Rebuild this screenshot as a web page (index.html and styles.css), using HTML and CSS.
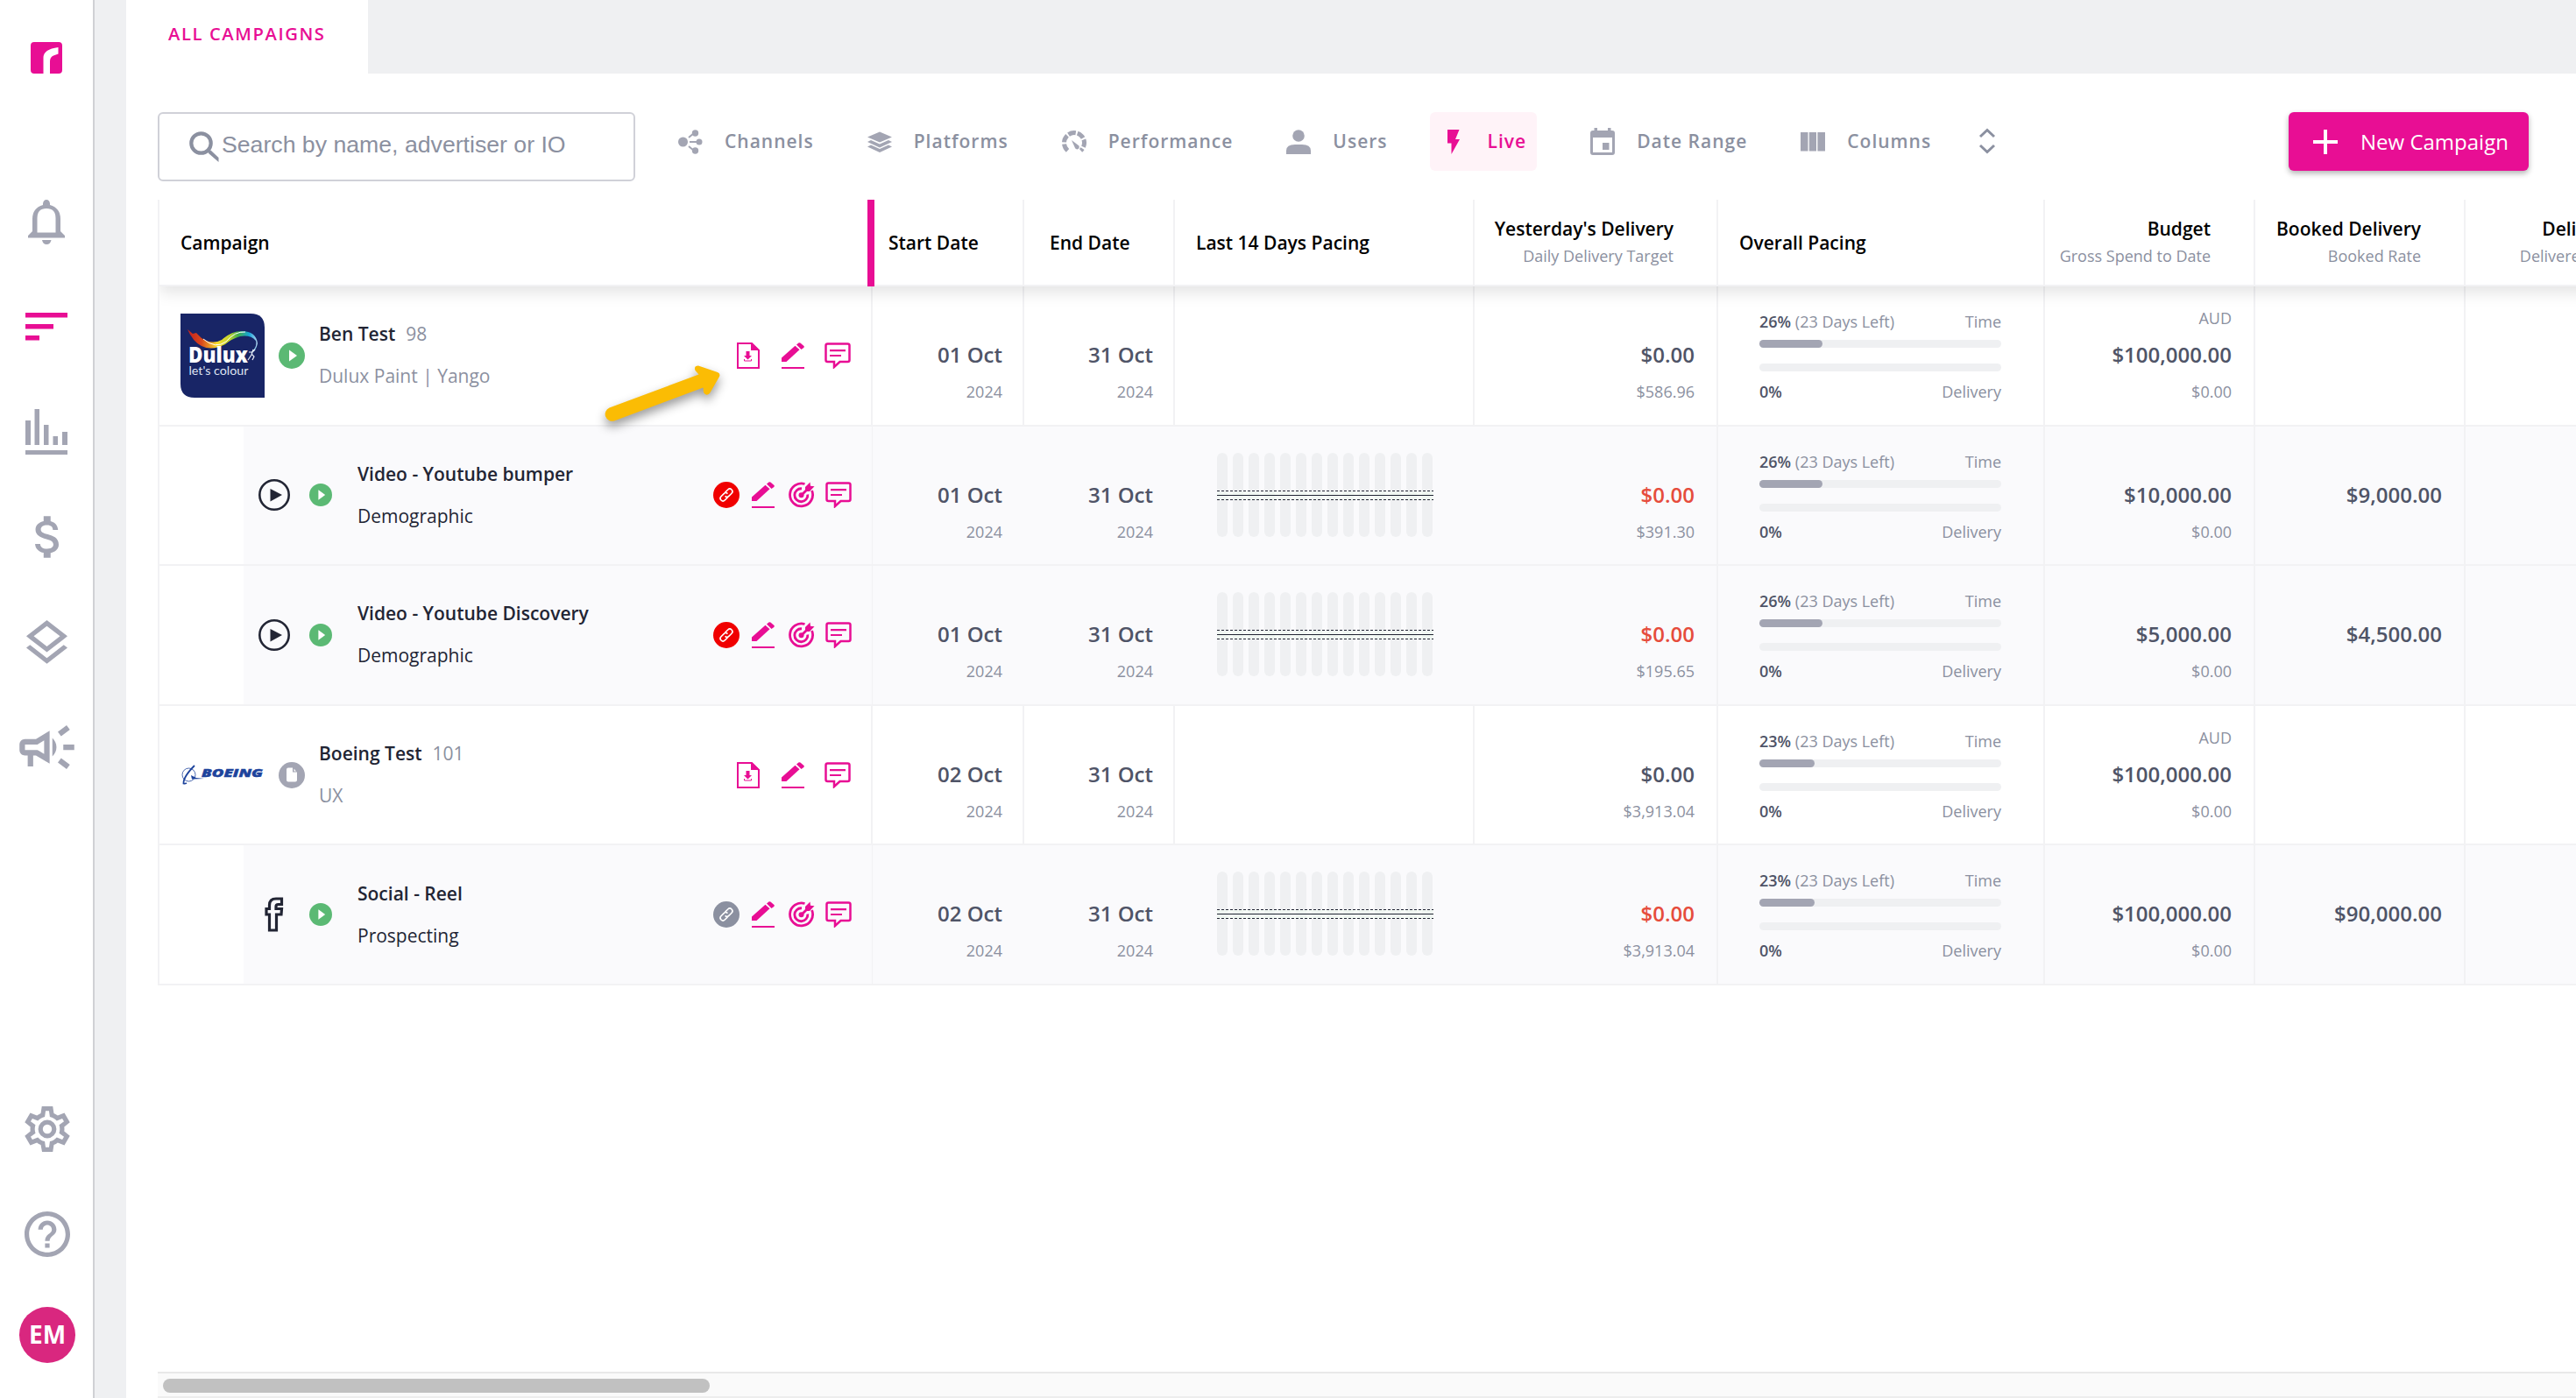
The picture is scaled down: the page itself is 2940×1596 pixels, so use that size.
FILE: index.html
```html
<!DOCTYPE html>
<html lang="en">
<head>
    <meta charset="UTF-8">
    <meta name="viewport" content="width=device-width, initial-scale=1.0">
    <title>All Campaigns</title>
    <link rel="stylesheet" href="styles.css">
</head>
<body>

    <!-- shared icons -->
    <svg class="sprite" aria-hidden="true">
        <symbol id="i-download" viewBox="0 0 26 30">
            <path d="M1 1H17L25 9V29H1Z" fill="none" stroke="currentColor" stroke-width="2"/>
            <path d="M16 0L26 9H16Z" fill="currentColor"/>
            <path d="M10.500 10H14.500V15H17L12.500 19.500L8 15H10.500Z" fill="currentColor"/>
            <path d="M8.500 19V21H16.500V19" fill="none" stroke="currentColor" stroke-width="1"/>
        </symbol>
        <symbol id="i-edit" viewBox="0 0 26 30">
            <path d="M0 17.500L15.500 3.800L20.500 8.300L5.500 22H0Z" fill="currentColor"/>
            <path d="M17 2.500L19.400 .5Q20.400 -.2 21.400 .5L25.500 4Q26.200 5 25.300 5.900L22.500 8Z" fill="currentColor"/>
            <path d="M0 28H26V30H0Z" fill="currentColor"/>
        </symbol>
        <symbol id="i-comment" viewBox="0 0 30 30">
            <path d="M3.500 1.500H26.500Q28.500 1.500 28.500 3.500V20Q28.500 22 26.500 22H17.500L11 28V22H3.500Q1.500 22 1.500 20V3.500Q1.500 1.500 3.500 1.500Z" fill="none" stroke="currentColor" stroke-width="2.500"/>
            <path d="M6 9.200H24M6 15H19" stroke="currentColor" stroke-width="2.200"/>
        </symbol>
        <symbol id="i-target" viewBox="0 0 30 30">
            <g fill="none" stroke="currentColor" stroke-width="2.800">
                <path d="M18.500 2.500A13 13 0 1 0 26.600 10"/>
                <path d="M15 7.800A7.500 7.500 0 1 0 21.800 14.500"/>
                <path d="M14.500 15.500L23 7"/>
            </g>
            <circle cx="14.500" cy="15.300" r="3" fill="currentColor"/>
            <path d="M19 10V6L24.500 .5L25 4.800L29.500 5.300L24 11H19Z" fill="currentColor"/>
        </symbol>
        <symbol id="i-link" viewBox="0 0 30 30">
            <circle cx="15" cy="15" r="15" fill="currentColor"/>
            <g transform="rotate(-45 15 15)" fill="none" stroke="#fff" stroke-width="1.600">
                <path d="M14 18H9.500A3 3 0 0 1 9.500 12H14A3 3 0 0 1 17 15"/>
                <path d="M16 12H20.500A3 3 0 0 1 20.500 18H16A3 3 0 0 1 13 15"/>
            </g>
        </symbol>
        <symbol id="i-live" viewBox="0 0 30 30">
            <circle cx="15" cy="15" r="15" fill="#5bb974"/>
            <path d="M12 8.500L21 15L12 21.500Z" fill="#fff"/>
        </symbol>
        <symbol id="i-draft" viewBox="0 0 30 30">
            <circle cx="15" cy="15" r="15" fill="#a3a5b3"/>
            <path d="M11 6.500H16V11.500H21V20.500Q21 22.500 19 22.500H11Q9 22.500 9 20.500V8.500Q9 6.500 11 6.500Z" fill="#fff"/>
            <path d="M17.500 7.500L20 10.500H17.500Z" fill="#fff"/>
        </symbol>
        <symbol id="i-video" viewBox="0 0 36 36">
            <circle cx="18" cy="18" r="16.700" fill="none" stroke="currentColor" stroke-width="2.600"/>
            <path d="M13.500 11L27 18L13.500 25.500Z" fill="currentColor"/>
        </symbol>
        <symbol id="i-facebook" viewBox="0 0 22 40">
            <path d="M5.500 38V20H2V13.500H5.500V9.500Q5.500 2 13 2H19.500V8.500H15.500Q13 8.500 13 11V13.500H19.500L19 20H13.500V38Z" fill="none" stroke="currentColor" stroke-width="3.200"/>
        </symbol>
        <symbol id="i-pacing" viewBox="0 0 248 96">
            <g fill="#eff0f2">
                <rect x="0" width="12" height="96" rx="6"/>
                <rect x="18" width="12" height="96" rx="6"/>
                <rect x="36" width="12" height="96" rx="6"/>
                <rect x="54" width="12" height="96" rx="6"/>
                <rect x="72" width="12" height="96" rx="6"/>
                <rect x="90" width="12" height="96" rx="6"/>
                <rect x="108" width="12" height="96" rx="6"/>
                <rect x="126" width="12" height="96" rx="6"/>
                <rect x="144" width="12" height="96" rx="6"/>
                <rect x="162" width="12" height="96" rx="6"/>
                <rect x="180" width="12" height="96" rx="6"/>
                <rect x="198" width="12" height="96" rx="6"/>
                <rect x="216" width="12" height="96" rx="6"/>
                <rect x="234" width="12" height="96" rx="6"/>
            </g>
            <rect y="44" width="247" height="10" fill="#f2fff2" opacity=".45"/>
            <g stroke="#222534">
                <path d="M0 43.500H247M0 53.500H247" stroke-dasharray="3 2"/>
                <path d="M0 48.500H247"/>
            </g>
        </symbol>
    </svg>

    <div class="app">
        <aside class="sidebar">
            <svg class="brand" viewBox="0 0 36 36" width="36" height="36">
                <path d="M4 0H32Q36 0 36 4V32Q36 36 32 36H22V22Q22 17 26 15.500L31.500 13.500V6Q14.500 8 14.500 18V36H4Q0 36 0 32V4Q0 0 4 0Z" fill="#e80e94"/>
            </svg>
            <nav class="nav">
                <a class="nav-item">
                    <svg viewBox="0 0 42 51" width="42" height="51">
                        <path fill-rule="evenodd" d="M17 6V4.500Q17.500 0 21 0T25 4.500V6Q37 9.500 37 22V36L42 41V43.500H0V41L5 36V22Q5 9.500 17 6ZM10.500 37.500H31.500V21Q31.500 10 21 10T10.500 21Z"/>
                        <path d="M16 46H26.500Q25.500 51 21.200 51T16 46Z"/>
                    </svg>
                </a>
                <a class="nav-item active">
                    <svg viewBox="0 0 48 32" width="48" height="32">
                        <path d="M0 0H48V5.500H0ZM0 13H32V18.500H0ZM0 26H16V31.500H0Z"/>
                    </svg>
                </a>
                <a class="nav-item">
                    <svg viewBox="0 0 48 52" width="48" height="52">
                        <path d="M0 13H6V41H0ZM10.500 0H16V41H10.500ZM21 18H26.500V41H21ZM31.500 31H37V41H31.500ZM42 26H48V41H42ZM0 47H48V52H0Z"/>
                    </svg>
                </a>
                <a class="nav-item">
                    <svg viewBox="6.3 3 10.2 18" width="27" height="48">
                        <path d="M11.8 10.9c-2.27-.59-3-1.2-3-2.150 0-1.090 1.010-1.850 2.700-1.850 1.780 0 2.440.85 2.500 2.100h2.210c-.07-1.720-1.120-3.300-3.210-3.810V3h-3v2.160c-1.940.42-3.500 1.680-3.500 3.610 0 2.310 1.910 3.460 4.700 4.130 2.500.6 3 1.480 3 2.410 0 .69-.49 1.790-2.700 1.790-2.060 0-2.870-.92-2.980-2.100h-2.200c.12 2.190 1.760 3.420 3.680 3.830V21h3v-2.150c1.950-.37 3.500-1.500 3.500-3.550 0-2.840-2.430-3.810-4.700-4.400z"/>
                    </svg>
                </a>
                <a class="nav-item">
                    <svg viewBox="3 2 18 19.1" width="47" height="50">
                        <path d="M11.990 18.540l-7.370-5.730L3 14.070l9 7 9-7-1.630-1.270-7.380 5.740zM12 16l7.360-5.730L21 9l-9-7-9 7 1.630 1.270L12 16zm0-11.470L17.740 9 12 13.470 6.260 9 12 4.530z"/>
                    </svg>
                </a>
                <a class="nav-item">
                    <svg viewBox="2 4 20 16" width="63" height="50">
                        <path d="M18 11v2h4v-2zM16 17.610l3.200 2.390 1.200-1.600-3.200-2.400zM20.400 5.600L19.200 4 16 6.400 17.200 8zM4 9c-1.100 0-2 .9-2 2v2c0 1.100.9 2 2 2h1v4h2v-4h1l5 3V6L8 9H4zm5.030 1.710L11 9.530v4.940l-1.970-1.180-.48-.29H4v-2h4.550l.48-.29zM15.500 12c0-1.330-.58-2.530-1.500-3.350v6.690c.92-.81 1.500-2.010 1.500-3.340z"/>
                    </svg>
                </a>
            </nav>
            <nav class="nav nav-bottom">
                <a class="nav-item">
                    <svg viewBox="2 2 20 20" width="52" height="52">
                        <path d="M12,8A4,4 0 0,1 16,12A4,4 0 0,1 12,16A4,4 0 0,1 8,12A4,4 0 0,1 12,8M12,10A2,2 0 0,0 10,12A2,2 0 0,0 12,14A2,2 0 0,0 14,12A2,2 0 0,0 12,10M9.700,22L9.130,18.930C8.500,18.680 7.960,18.340 7.440,17.940L4.500,19.100L2.100,15L4.570,12.970L4.500,12L4.570,11L2.100,9L4.500,4.900L7.440,6.050C7.960,5.660 8.500,5.320 9.130,5.070L9.600,2H14.400L14.870,5.070C15.500,5.320 16.040,5.660 16.560,6.050L19.500,4.900L21.900,9L19.430,11L19.500,12L19.430,13L21.900,15L19.500,19.100L16.560,17.950C16.040,18.340 15.500,18.680 14.870,18.930L14.400,22H9.700M11.250,4L10.880,6.610C9.680,6.860 8.620,7.500 7.850,8.390L5.440,7.350L4.690,8.650L6.800,10.200C6.400,11.370 6.400,12.640 6.800,13.800L4.680,15.360L5.430,16.660L7.860,15.620C8.630,16.500 9.680,17.140 10.870,17.380L11.240,20H12.760L13.130,17.390C14.320,17.140 15.370,16.500 16.140,15.620L18.570,16.660L19.320,15.360L17.200,13.810C17.600,12.640 17.600,11.370 17.200,10.200L19.310,8.650L18.560,7.350L16.150,8.390C15.380,7.500 14.320,6.860 13.120,6.620L12.750,4H11.250Z"/>
                    </svg>
                </a>
                <a class="nav-item">
                    <svg viewBox="2 2 20 20" width="52" height="52">
                        <path d="M11 18h2v-2h-2v2zm1-16C6.480 2 2 6.480 2 12s4.480 10 10 10 10-4.480 10-10S17.520 2 12 2zm0 18c-4.410 0-8-3.590-8-8s3.590-8 8-8 8 3.590 8 8-3.590 8-8 8zm0-14c-2.210 0-4 1.790-4 4h2c0-1.100.9-2 2-2s2 .9 2 2c0 2-3 1.750-3 5h2c0-2.250 3-2.500 3-5 0-2.210-1.790-4-4-4z"/>
                    </svg>
                </a>
            </nav>
            <div class="avatar">EM</div>
        </aside>

        <main class="main">
            <div class="tabs">
                <div class="tab">ALL CAMPAIGNS</div>
            </div>

            <div class="toolbar">
                <div class="search">
                    <svg viewBox="0 0 34 36" width="34" height="36">
                        <circle cx="13.500" cy="13.500" r="11.200" fill="none" stroke="#8b90a0" stroke-width="4.200"/>
                        <path d="M21 22.500L24.500 21.500L33.500 30V35L22 25Z" fill="#8b90a0"/>
                    </svg>
                    <span>Search by name, advertiser or IO</span>
                </div>
                <div class="filters">
                    <div class="filter">
                        <svg viewBox="0 0 28 28" width="28" height="28">
                            <circle cx="5.500" cy="14" r="5.500"/><circle cx="19.500" cy="4" r="3.700"/><circle cx="24" cy="14" r="3.500"/><circle cx="19.500" cy="24" r="3.700"/>
                            <path d="M12 9L18 4M13 14H24M12 19L18 24" stroke="currentColor" stroke-width="2" fill="none"/>
                        </svg>
                        <span>Channels</span>
                    </div>
                    <div class="filter">
                        <svg viewBox="0 0 28 28" width="28" height="28">
                            <path d="M14 2.500L28 8.500L14 14.500L0 8.500ZM4 12L14 16.500L24 12L28 14L14 20.500L0 14ZM4 17.500L14 22L24 17.500L28 19.500L14 26L0 19.500Z"/>
                        </svg>
                        <span>Platforms</span>
                    </div>
                    <div class="filter">
                        <svg viewBox="0 0 28 28" width="28" height="28">
                            <path d="M6.500 23.800A11.500 11.500 0 1 1 21.500 23.800" fill="none" stroke="currentColor" stroke-width="5" stroke-dasharray="8.500 2"/>
                            <path d="M11 12L19.500 18.500Q20.500 21.500 17.500 22.500Q15.500 22 15 21Z"/>
                        </svg>
                        <span>Performance</span>
                    </div>
                    <div class="filter">
                        <svg viewBox="0 0 28 28" width="28" height="28">
                            <circle cx="14" cy="7" r="6.800"/>
                            <path d="M0 28V24Q0 17 10 17H18Q28 17 28 24V28Z"/>
                        </svg>
                        <span>Users</span>
                    </div>
                    <div class="filter selected">
                        <svg viewBox="0 0 28 28" width="28" height="28">
                            <path d="M7 0H20.500L16 11H21L11.500 28V15.500H7Z"/>
                        </svg>
                        <span>Live</span>
                    </div>
                    <div class="filter date">
                        <svg viewBox="0 0 28 31" width="28" height="31">
                            <path fill-rule="evenodd" d="M4.500 0H8V3H20V0H23.500V3H25Q28 3 28 6V28Q28 31 25 31H3Q0 31 0 28V6Q0 3 3 3H4.500ZM3 11V28H25V11Z"/>
                            <rect x="14" y="17" width="7.500" height="8"/>
                        </svg>
                        <span>Date Range</span>
                    </div>
                    <div class="filter">
                        <svg viewBox="0 0 28 28" width="28" height="28">
                            <path d="M0 3H8.500V24.500H0ZM9.800 3H18V24.500H9.800ZM19.400 3H28V24.500H19.400Z"/>
                        </svg>
                        <span>Columns</span>
                    </div>
                    <svg class="expand" viewBox="0 0 20 30" width="20" height="30">
                        <path d="M2 10L10 2.500L18 10M2 20L10 27.500L18 20" fill="none" stroke="#8b90a0" stroke-width="3"/>
                    </svg>
                </div>
                <button class="new-btn">
                    <svg viewBox="0 0 28 28" width="28" height="28">
                        <path d="M12 0H16V12H28V16H16V28H12V16H0V12H12Z" fill="#fff"/>
                    </svg>
                    <span>New Campaign</span>
                </button>
            </div>

            <div class="table">
                <div class="row head">
                    <div class="cell first"><b>Campaign</b><span class="resize"></span></div>
                    <div class="cell"><b>Start Date</b></div>
                    <div class="cell end"><b>End Date</b></div>
                    <div class="cell last14"><b>Last 14 Days Pacing</b></div>
                    <div class="cell num"><b>Yesterday's Delivery</b><small>Daily Delivery Target</small></div>
                    <div class="cell last14"><b>Overall Pacing</b></div>
                    <div class="cell num"><b>Budget</b><small>Gross Spend to Date</small></div>
                    <div class="cell num"><b>Booked Delivery</b><small>Booked Rate</small></div>
                    <div class="cell num delivered"><b>Delivered</b><small>Delivered Rate</small></div>
                </div>

                <div class="row">
                    <div class="cell campaign">
                        <svg class="logo" viewBox="0 0 96 96" width="96" height="96">
                            <defs>
                                <linearGradient id="flourish">
                                    <stop offset="0" stop-color="#c4201d"/>
                                    <stop offset=".2" stop-color="#d9481c"/>
                                    <stop offset=".42" stop-color="#f8dc2c"/>
                                    <stop offset=".6" stop-color="#c3d52f"/>
                                    <stop offset=".72" stop-color="#3fae49"/>
                                    <stop offset=".88" stop-color="#16a6d9"/>
                                    <stop offset="1" stop-color="#b5d4ee"/>
                                </linearGradient>
                            </defs>
                            <path d="M0 0H80Q96 0 96 16V96H16Q0 96 0 80Z" fill="#182566"/>
                            <path d="M8 18L14 23L18 22L24 28Q36 36 47 30Q58 20 70 20Q86 20 88 34Q86 44 80 45Q88 38 86 31Q80 24 68 26Q58 29 51 35Q36 43 24 37Q14 32 8 18Z" fill="url(#flourish)"/>
                            <path d="M26 29Q40 41 52 32Q62 20 74 21" fill="none" stroke="#fff" stroke-width="1"/>
                            <path d="M83 41L81 47L77 53M81 46L84 49L82 53M78 44L82 44L85 41" fill="none" stroke="#e9edf8" stroke-width="1.200"/>
                            <text class="dulux" x="9" y="56" textLength="68" lengthAdjust="spacingAndGlyphs">Dulux</text>
                            <text class="slogan" x="9.500" y="70" textLength="68" lengthAdjust="spacingAndGlyphs">let's colour</text>
                        </svg>
                        <svg class="status" width="30" height="30"><use href="#i-live"/></svg>
                        <div class="names">
                            <p><b>Ben Test</b><i>98</i></p>
                            <p class="client">Dulux Paint | Yango</p>
                        </div>
                        <div class="actions">
                            <svg width="26" height="30"><use href="#i-download"/></svg>
                            <svg class="edit" width="26" height="30"><use href="#i-edit"/></svg>
                            <svg width="30" height="30"><use href="#i-comment"/></svg>
                        </div>
                        <svg class="pointer" viewBox="0 0 160 100" width="160" height="100">
                            <path d="M25.500 55.500L127.500 17.500L123.500 13Q121.500 7.500 127 7.500L149 15Q152.500 16.500 151 20L140 39Q136 43 133 38L132.500 32.500L31 70.500A8 8 0 0 1 25.500 55.500Z"/>
                        </svg>
                    </div>
                    <div class="cell value"><strong>01 Oct</strong><small>2024</small></div>
                    <div class="cell value"><strong>31 Oct</strong><small>2024</small></div>
                    <div class="cell"></div>
                    <div class="cell value money"><strong>$0.00</strong><small>$586.96</small></div>
                    <div class="cell pacing">
                        <p><b>26%</b> (23 Days Left) <span>Time</span></p>
                        <div class="bar"><div style="width: 26%"></div></div>
                        <div class="bar"></div>
                        <p><b>0%</b> <span>Delivery</span></p>
                    </div>
                    <div class="cell value money"><small>AUD</small><strong>$100,000.00</strong><small>$0.00</small></div>
                    <div class="cell"></div>
                    <div class="cell"></div>
                </div>

                <div class="row child">
                    <div class="cell campaign">
                        <svg class="channel" width="36" height="36"><use href="#i-video"/></svg>
                        <svg class="status" width="26" height="26"><use href="#i-live"/></svg>
                        <div class="names">
                            <p><b>Video - Youtube bumper</b></p>
                            <p>Demographic</p>
                        </div>
                        <div class="actions">
                            <svg class="broken" width="30" height="30"><use href="#i-link"/></svg>
                            <svg width="26" height="30"><use href="#i-edit"/></svg>
                            <svg class="goal" width="30" height="30"><use href="#i-target"/></svg>
                            <svg width="30" height="30"><use href="#i-comment"/></svg>
                        </div>
                    </div>
                    <div class="cell value"><strong>01 Oct</strong><small>2024</small></div>
                    <div class="cell value"><strong>31 Oct</strong><small>2024</small></div>
                    <div class="cell chart"><svg width="248" height="96"><use href="#i-pacing"/></svg></div>
                    <div class="cell value money late"><strong>$0.00</strong><small>$391.30</small></div>
                    <div class="cell pacing">
                        <p><b>26%</b> (23 Days Left) <span>Time</span></p>
                        <div class="bar"><div style="width: 26%"></div></div>
                        <div class="bar"></div>
                        <p><b>0%</b> <span>Delivery</span></p>
                    </div>
                    <div class="cell value money"><strong>$10,000.00</strong><small>$0.00</small></div>
                    <div class="cell value money"><strong>$9,000.00</strong></div>
                    <div class="cell"></div>
                </div>

                <div class="row child">
                    <div class="cell campaign">
                        <svg class="channel" width="36" height="36"><use href="#i-video"/></svg>
                        <svg class="status" width="26" height="26"><use href="#i-live"/></svg>
                        <div class="names">
                            <p><b>Video - Youtube Discovery</b></p>
                            <p>Demographic</p>
                        </div>
                        <div class="actions">
                            <svg class="broken" width="30" height="30"><use href="#i-link"/></svg>
                            <svg width="26" height="30"><use href="#i-edit"/></svg>
                            <svg class="goal" width="30" height="30"><use href="#i-target"/></svg>
                            <svg width="30" height="30"><use href="#i-comment"/></svg>
                        </div>
                    </div>
                    <div class="cell value"><strong>01 Oct</strong><small>2024</small></div>
                    <div class="cell value"><strong>31 Oct</strong><small>2024</small></div>
                    <div class="cell chart"><svg width="248" height="96"><use href="#i-pacing"/></svg></div>
                    <div class="cell value money late"><strong>$0.00</strong><small>$195.65</small></div>
                    <div class="cell pacing">
                        <p><b>26%</b> (23 Days Left) <span>Time</span></p>
                        <div class="bar"><div style="width: 26%"></div></div>
                        <div class="bar"></div>
                        <p><b>0%</b> <span>Delivery</span></p>
                    </div>
                    <div class="cell value money"><strong>$5,000.00</strong><small>$0.00</small></div>
                    <div class="cell value money"><strong>$4,500.00</strong></div>
                    <div class="cell"></div>
                </div>

                <div class="row">
                    <div class="cell campaign">
                        <svg class="logo" viewBox="0 0 96 96" width="96" height="96">
                            <g fill="none" stroke="#1d439c">
                                <circle cx="9.500" cy="47.500" r="7.500" stroke-width=".8"/>
                                <path d="M16 37Q3 50 3.500 57.500Q5 58 7 57" stroke-width="1.800"/>
                            </g>
                            <path d="M12 48L18 51L27 52L13 52.500Z" fill="#1d439c"/>
                            <text class="boeing" x="24" y="49.500" textLength="70" lengthAdjust="spacingAndGlyphs">BOEING</text>
                        </svg>
                        <svg class="status" width="30" height="30"><use href="#i-draft"/></svg>
                        <div class="names">
                            <p><b>Boeing Test</b><i>101</i></p>
                            <p class="client">UX</p>
                        </div>
                        <div class="actions">
                            <svg width="26" height="30"><use href="#i-download"/></svg>
                            <svg class="edit" width="26" height="30"><use href="#i-edit"/></svg>
                            <svg width="30" height="30"><use href="#i-comment"/></svg>
                        </div>
                    </div>
                    <div class="cell value"><strong>02 Oct</strong><small>2024</small></div>
                    <div class="cell value"><strong>31 Oct</strong><small>2024</small></div>
                    <div class="cell"></div>
                    <div class="cell value money"><strong>$0.00</strong><small>$3,913.04</small></div>
                    <div class="cell pacing">
                        <p><b>23%</b> (23 Days Left) <span>Time</span></p>
                        <div class="bar"><div style="width: 23%"></div></div>
                        <div class="bar"></div>
                        <p><b>0%</b> <span>Delivery</span></p>
                    </div>
                    <div class="cell value money"><small>AUD</small><strong>$100,000.00</strong><small>$0.00</small></div>
                    <div class="cell"></div>
                    <div class="cell"></div>
                </div>

                <div class="row child">
                    <div class="cell campaign">
                        <svg class="channel" width="36" height="40"><use href="#i-facebook"/></svg>
                        <svg class="status" width="26" height="26"><use href="#i-live"/></svg>
                        <div class="names">
                            <p><b>Social - Reel</b></p>
                            <p>Prospecting</p>
                        </div>
                        <div class="actions">
                            <svg class="linked" width="30" height="30"><use href="#i-link"/></svg>
                            <svg width="26" height="30"><use href="#i-edit"/></svg>
                            <svg class="goal" width="30" height="30"><use href="#i-target"/></svg>
                            <svg width="30" height="30"><use href="#i-comment"/></svg>
                        </div>
                    </div>
                    <div class="cell value"><strong>02 Oct</strong><small>2024</small></div>
                    <div class="cell value"><strong>31 Oct</strong><small>2024</small></div>
                    <div class="cell chart"><svg width="248" height="96"><use href="#i-pacing"/></svg></div>
                    <div class="cell value money late"><strong>$0.00</strong><small>$3,913.04</small></div>
                    <div class="cell pacing">
                        <p><b>23%</b> (23 Days Left) <span>Time</span></p>
                        <div class="bar"><div style="width: 23%"></div></div>
                        <div class="bar"></div>
                        <p><b>0%</b> <span>Delivery</span></p>
                    </div>
                    <div class="cell value money"><strong>$100,000.00</strong><small>$0.00</small></div>
                    <div class="cell value money"><strong>$90,000.00</strong></div>
                    <div class="cell"></div>
                </div>
            </div>

            <div class="scrollbar"><div class="thumb"></div></div>
        </main>
    </div>

</body>
</html>
```

FILE: styles.css
```css
* {
    box-sizing: border-box;
}

body {
    margin: 0;
    font-family: "Open Sans", "Noto Sans", sans-serif;
    font-size: 21px;
    color: #222534;
    background: #eff0f2;
    overflow: hidden;
}

p {
    margin: 0;
}

svg {
    display: block;
    flex: none;
}

.sprite {
    display: none;
}

.app {
    display: flex;
    height: 1596px;
}

/* Sidebar */
.sidebar {
    flex: none;
    display: flex;
    flex-direction: column;
    align-items: center;
    width: 108px;
    padding: 48px 0 40px;
    background: #fff;
    border-right: 2px solid #d0d1d4;
}

.nav {
    margin-top: 109px;
    color: #a3a5b3;
}

.nav-item {
    display: flex;
    align-items: center;
    justify-content: center;
    height: 120px;
}

.nav-item svg {
    fill: currentColor;
}

.nav-item.active {
    color: #e80e94;
}

.nav-bottom {
    margin-top: auto;
    margin-bottom: 23px;
    padding-left: 2px;
}

.avatar {
    width: 64px;
    height: 64px;
    margin-left: 2px;
    border-radius: 50%;
    background: #d9277f;
    color: #fff;
    font-size: 28px;
    font-weight: 700;
    line-height: 63px;
    text-align: center;
}

/* Main area */
.main {
    flex: 1;
    min-width: 0;
    display: flex;
    flex-direction: column;
    margin-left: 36px;
    background: #fff;
    overflow: hidden;
}

.tabs {
    height: 84px;
    background: #eff0f2;
}

.tab {
    width: 276px;
    height: 84px;
    padding-left: 48px;
    background: #fff;
    color: #e80e94;
    font-size: 20.2px;
    font-weight: 600;
    line-height: 76px;
    letter-spacing: 1.6px;
}

.toolbar {
    display: flex;
    align-items: flex-start;
    height: 144px;
    padding: 44px 54px 0 36px;
}

.search {
    display: flex;
    align-items: center;
    width: 545px;
    height: 79px;
    padding-left: 34px;
    border: 2px solid #d0d1d8;
    border-radius: 6px;
    color: #8b90a0;
    font-family: "Liberation Sans", Arial, sans-serif;
    font-size: 26.67px;
}

.search span {
    margin: -5px 0 0 3px;
    white-space: nowrap;
}

.filters {
    display: flex;
    gap: 36px;
    margin-left: 36px;
}

.filter {
    display: flex;
    align-items: center;
    gap: 25px;
    height: 67px;
    padding: 0 12px 0 13px;
    border-radius: 6px;
    color: #8b90a0;
    font-weight: 600;
    letter-spacing: 1px;
    white-space: nowrap;
}

.filter span {
    margin-top: -1px;
}

.filter svg {
    color: #a3a5b3;
    fill: currentColor;
}

.filter.selected {
    background: #fff3f8;
    color: #e80e94;
}

.filter.selected svg {
    color: #e80e94;
}

.filter.date {
    margin-left: 12px;
}

.expand {
    margin: 18px 0 0 6px;
}

.new-btn {
    display: flex;
    align-items: center;
    gap: 26px;
    width: 274px;
    height: 67px;
    margin-left: auto;
    padding: 0 0 0 28px;
    border: 0;
    border-radius: 6px;
    background: #e80e94;
    box-shadow: 0 3px 6px rgba(0, 0, 0, .3);
    color: #fff;
    font-family: inherit;
    font-size: 24px;
    font-weight: 500;
    white-space: nowrap;
}

/* Campaign table */
.table {
    width: 2876px;
    margin-left: 36px;
    border-left: 2px solid #f2f2f4;
}

.row {
    display: grid;
    grid-template-columns: 814px 173px 172px 342px 278px 373px 240px 240px 240px;
    height: 159.6px;
    border-bottom: 2px solid #f2f2f4;
}

.cell {
    position: relative;
    border-right: 2px solid #f2f2f4;
    white-space: nowrap;
}

.cell small {
    color: #8b90a0;
    font-size: 18px;
}

.head {
    position: relative;
    z-index: 1;
    height: 99px;
    background: #fff;
    box-shadow: 0 8px 16px rgba(0, 0, 0, .1);
    clip-path: inset(0 0 -30px 0);
    color: #000;
}

.head .cell {
    display: flex;
    flex-direction: column;
    justify-content: center;
    padding-left: 18px;
}

.head b {
    font-weight: 600;
}

.head .first {
    padding-left: 24px;
}

.head .end {
    padding-left: 29px;
}

.head .last14 {
    padding-left: 24px;
}

.head .num {
    align-items: flex-end;
    padding-right: 49px;
    line-height: 31px;
}

.head .delivered {
    padding-right: 54px;
}

.resize {
    position: absolute;
    top: 0;
    right: -4px;
    width: 8px;
    height: 99px;
    background: #e80e94;
}

.campaign {
    display: flex;
    align-items: center;
    padding: 0 23px 0 24px;
}

.campaign .status {
    margin-left: 16px;
}

.names {
    margin: -1px 0 0 16px;
    line-height: 48px;
}

.names b {
    font-weight: 600;
}

.names i {
    margin-left: 12px;
    color: #8b90a0;
    font-style: normal;
}

.names .client {
    color: #8b90a0;
}

.actions {
    display: flex;
    gap: 24px;
    margin-left: auto;
    color: #e80e94;
}

.actions .edit {
    margin: 0 -1px 0 1px;
}

.dulux {
    fill: #fff;
    font-size: 24px;
    font-weight: 800;
}

.slogan {
    fill: #dfe3f2;
    font-family: Lato, sans-serif;
    font-size: 13px;
}

.boeing {
    fill: #1d439c;
    stroke: #1d439c;
    stroke-width: .4px;
    font-size: 11.5px;
    font-style: italic;
    font-weight: 800;
}

.pointer {
    position: absolute;
    z-index: 2;
    top: 83px;
    left: 488px;
    fill: #fbbc04;
    filter: drop-shadow(0 6px 6px rgba(0, 0, 0, .4));
}

.value {
    display: flex;
    flex-direction: column;
    align-items: flex-end;
    padding: 57px 23px 0 0;
    line-height: 42px;
}

.value strong {
    color: #4f5467;
    font-size: 24px;
    font-weight: 600;
}

.value small:first-child {
    margin-top: -42px;
}

.value.money {
    padding-right: 25px;
}

.value.late strong {
    color: #e64c3c;
}

.pacing {
    padding: 28px 48px 0 47px;
    color: #8b90a0;
    font-size: 18px;
    line-height: 24px;
}

.pacing b {
    color: #4f5467;
    font-weight: 600;
}

.pacing span {
    float: right;
}

.bar {
    height: 9px;
    margin: 9px 0 18px;
    border-radius: 5px;
    background: #eff0f2;
}

.bar + .bar {
    margin: 0 0 11px;
}

.bar div {
    height: 9px;
    border-radius: 5px;
    background: #a3a5b3;
}

/* Line items nested under a campaign */
.child .cell {
    background: #fafafc;
}

.child .cell:nth-child(2),
.child .cell:nth-child(3),
.child .cell:nth-child(4) {
    border-right-color: transparent;
}

.child .campaign {
    padding-left: 17px;
    margin-left: 96px;
    border-right-width: 1px;
}

.child {
    background: #fff;
}

.child .status {
    margin-left: 22px;
}

.child .names {
    margin-left: 29px;
}

.child .actions {
    gap: 14px;
}

.child .goal {
    margin: 0 -2px 0 2px;
}

.child .broken {
    color: #f00000;
}

.child .linked {
    color: #8b90a0;
}

.chart {
    padding: 30px 0 0 48px;
}

/* Horizontal scroll */
.scrollbar {
    height: 30px;
    margin: auto 0 0 36px;
    padding: 6px;
    border-top: 2px solid #e8e8e8;
    border-bottom: 2px solid #ededed;
    background: #fafafa;
}

.thumb {
    width: 624px;
    height: 16px;
    border-radius: 8px;
    background: #c1c1c1;
}
```
